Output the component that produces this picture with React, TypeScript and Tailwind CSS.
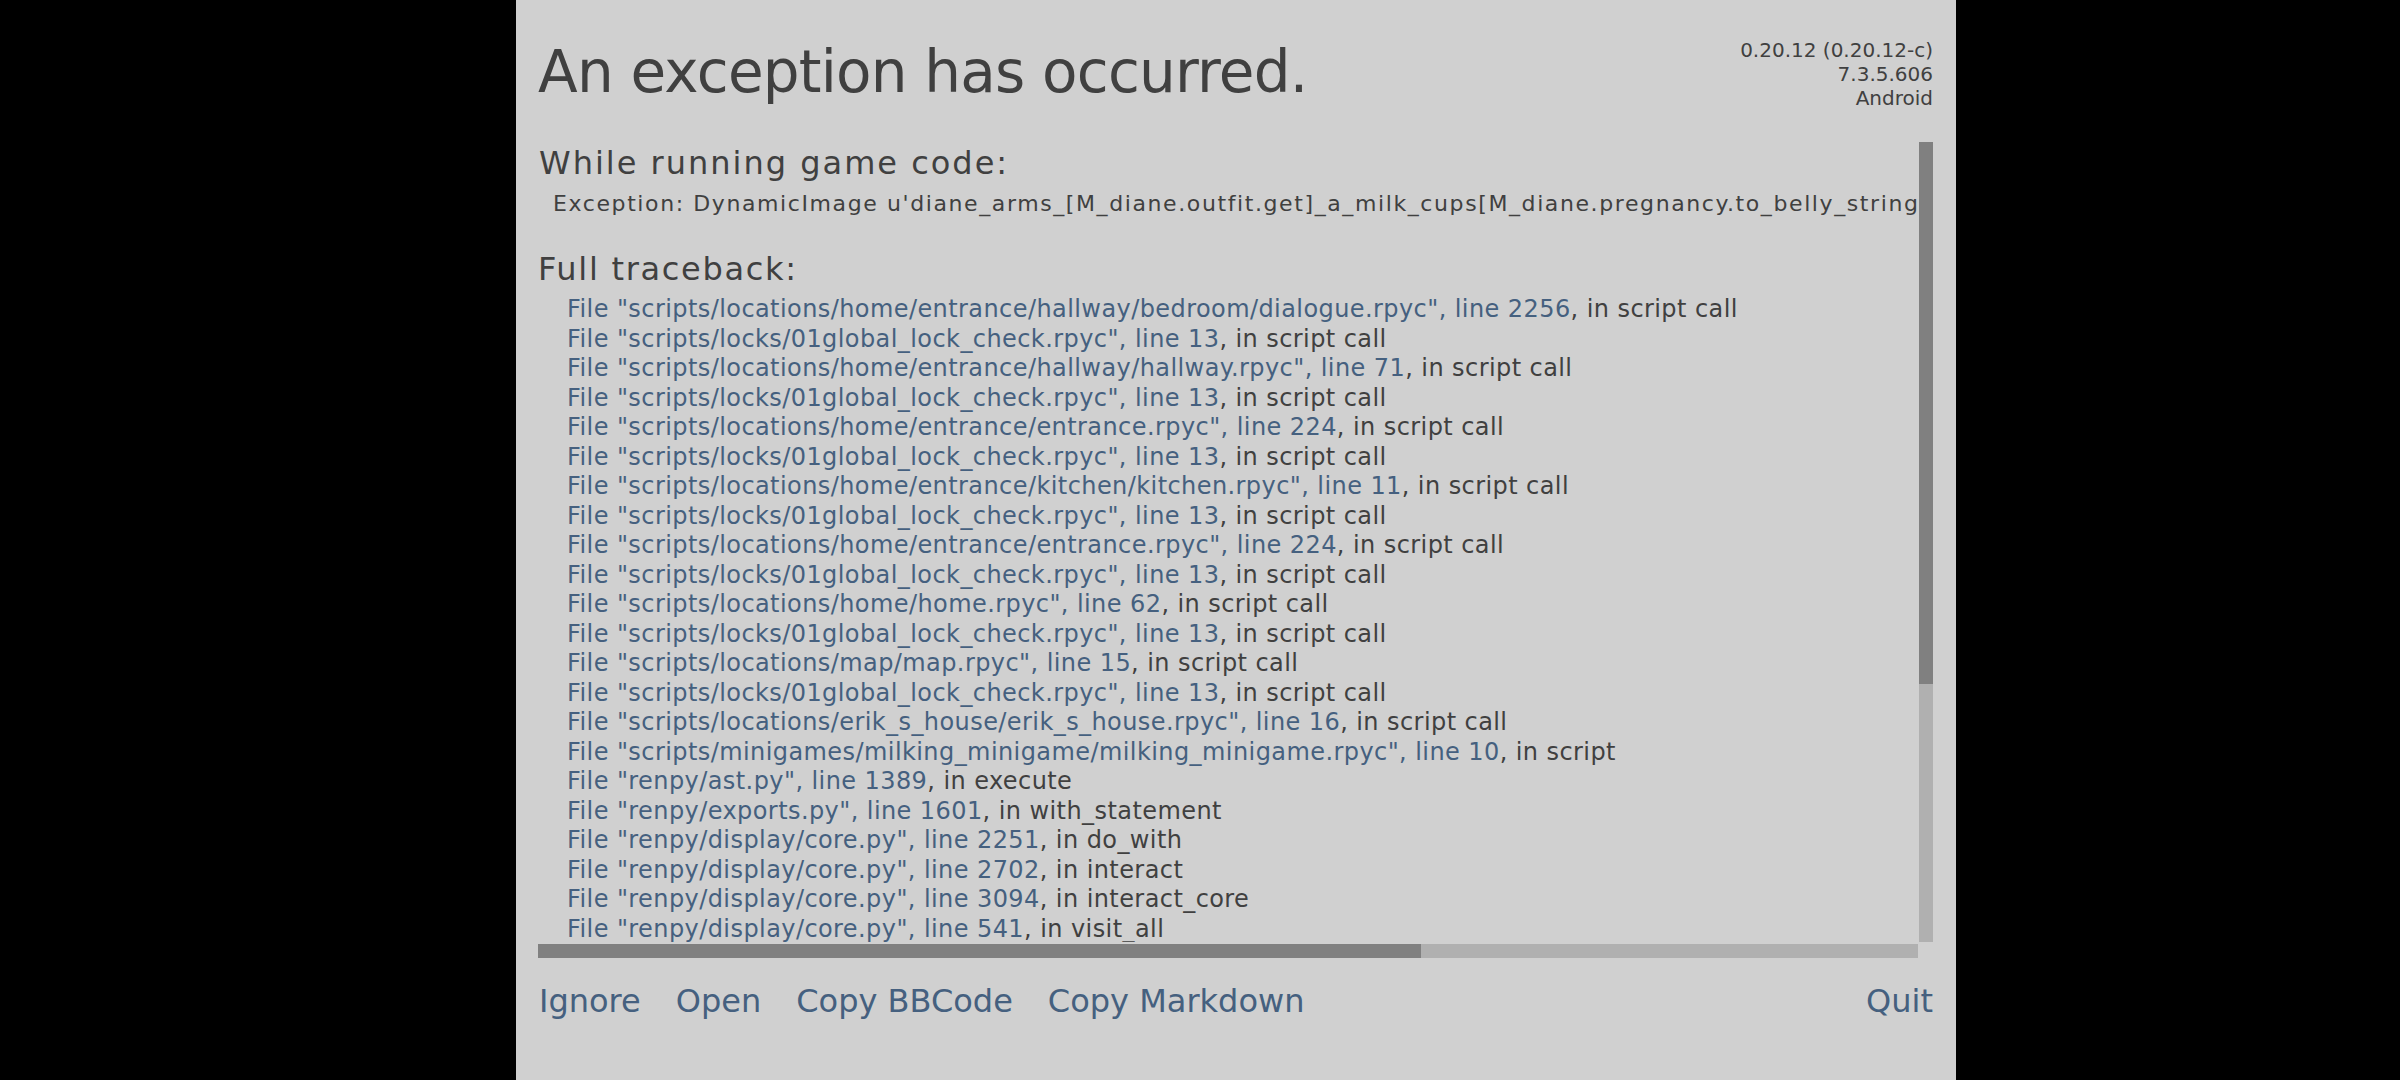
const trace: [string, number, string][] = [
  ['scripts/locations/home/entrance/hallway/bedroom/dialogue.rpyc', 2256, 'script call'],
  ['scripts/locks/01global_lock_check.rpyc', 13, 'script call'],
  ['scripts/locations/home/entrance/hallway/hallway.rpyc', 71, 'script call'],
  ['scripts/locks/01global_lock_check.rpyc', 13, 'script call'],
  ['scripts/locations/home/entrance/entrance.rpyc', 224, 'script call'],
  ['scripts/locks/01global_lock_check.rpyc', 13, 'script call'],
  ['scripts/locations/home/entrance/kitchen/kitchen.rpyc', 11, 'script call'],
  ['scripts/locks/01global_lock_check.rpyc', 13, 'script call'],
  ['scripts/locations/home/entrance/entrance.rpyc', 224, 'script call'],
  ['scripts/locks/01global_lock_check.rpyc', 13, 'script call'],
  ['scripts/locations/home/home.rpyc', 62, 'script call'],
  ['scripts/locks/01global_lock_check.rpyc', 13, 'script call'],
  ['scripts/locations/map/map.rpyc', 15, 'script call'],
  ['scripts/locks/01global_lock_check.rpyc', 13, 'script call'],
  ['scripts/locations/erik_s_house/erik_s_house.rpyc', 16, 'script call'],
  ['scripts/minigames/milking_minigame/milking_minigame.rpyc', 10, 'script'],
  ['renpy/ast.py', 1389, 'execute'],
  ['renpy/exports.py', 1601, 'with_statement'],
  ['renpy/display/core.py', 2251, 'do_with'],
  ['renpy/display/core.py', 2702, 'interact'],
  ['renpy/display/core.py', 3094, 'interact_core'],
  ['renpy/display/core.py', 541, 'visit_all'],
]

const actions = ['Ignore', 'Open', 'Copy BBCode', 'Copy Markdown']

export default function App() {
  return (
    <div className="flex h-[1080px] w-[2400px] bg-black pl-[516px]">
      <div className="flex h-full w-[1440px] flex-col bg-[#d0d0d0] pl-[22px] pr-[23px] font-['DejaVu_Sans',sans-serif] text-[#404040]">
        {/* header */}
        <header className="flex h-[142px] items-start justify-between pt-[38px]">
          <h1 className="mt-[5px] text-[58px] leading-[58px] tracking-[-0.8px]">An exception has occurred.</h1>
          <div className="text-right text-[20px] leading-[24px]">
            <p>0.20.12 (0.20.12-c)</p>
            <p>7.3.5.606</p>
            <p>Android</p>
          </div>
        </header>

        {/* viewport + vertical scrollbar */}
        <div className="flex h-[800px]">
          <div className="h-full w-[1381px] overflow-hidden whitespace-nowrap pt-[1px]">
            <p className="pl-[1px] text-[32px] leading-[40px] tracking-[2px]">While running game code:</p>
            <p className="mt-[6px] pl-[15px] text-[22px] leading-[30px] tracking-[1.6px]">
              Exception: DynamicImage u'diane_arms_[M_diane.outfit.get]_a_milk_cups[M_diane.pregnancy.to_belly_string
            </p>
            <p className="mt-[30px] text-[32px] leading-[40px] tracking-[1.7px]">Full traceback:</p>
            <ul className="mt-[6px] pl-[29px] text-[24px] leading-[29.5px] tracking-[0.42px]">
              {trace.map(([file, line, fn], i) => (
                <li key={i}>
                  <span className="text-[#45607f]">
                    File "{file}", line {line}
                  </span>
                  , in {fn}
                </li>
              ))}
            </ul>
          </div>
          <div className="flex w-[14px] flex-col bg-[#b0b0b0]">
            <div className="h-[542px] bg-[#808080]" />
          </div>
        </div>

        {/* horizontal scrollbar */}
        <div className="mt-[2px] flex h-[14px] w-[1380px] bg-[#b0b0b0]">
          <div className="w-[883px] bg-[#808080]" />
        </div>

        {/* actions */}
        <div className="mt-[23px] flex gap-[35px] pl-[1px] text-[32px] leading-[40px] text-[#45607f]">
          {actions.map((a) => (
            <button key={a}>{a}</button>
          ))}
          <button className="ml-auto">Quit</button>
        </div>
      </div>
    </div>
  )
}
